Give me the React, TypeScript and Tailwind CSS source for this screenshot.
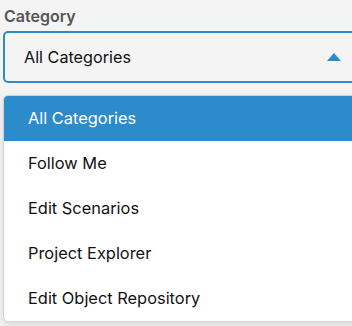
const CATEGORIES = [
    "All Categories",
    "Follow Me",
    "Edit Scenarios",
    "Project Explorer",
    "Edit Object Repository",
];

export default function App() {
    const selected = "All Categories";

    return (
        <div
            className="h-[326px] w-[352px] overflow-hidden bg-[#f4f4f4] pl-[3px] pt-[5px]"
            style={{ fontFamily: "Inter, 'Noto Sans', sans-serif" }}
        >
            <label className="block pl-[1px] text-[16px] font-semibold leading-[22px] text-[#555]">
                Category
            </label>

            {/* Select box */}
            <div className="mt-[4px] flex h-[52px] w-[380px] items-center rounded-[5px] border-2 border-[#2e8bcb] bg-[#f4f4f4] pl-[19px]">
                <span className="text-[16.2px] text-[#111]">{selected}</span>
                <svg
                    className="ml-[196px]"
                    width="14"
                    height="8"
                    viewBox="0 0 14 8"
                    aria-hidden
                >
                    <path d="M7 0 L14 8 L0 8 Z" fill="#2e8bcb" />
                </svg>
            </div>

            {/* Options list */}
            <ul className="mt-[12px] w-[380px] overflow-hidden rounded-[5px] border border-[#d4d4d4] bg-white shadow-[0_2px_6px_rgba(0,0,0,0.12)]">
                {CATEGORIES.map((c) => (
                    <li
                        key={c}
                        className={
                            c === selected
                                ? "flex h-[45px] items-center bg-[#2e8bcb] pl-[24px] text-[16.4px] text-white"
                                : "flex h-[45px] items-center pl-[24px] text-[16.4px] text-[#111]"
                        }
                    >
                        {c}
                    </li>
                ))}
            </ul>
        </div>
    );
}
